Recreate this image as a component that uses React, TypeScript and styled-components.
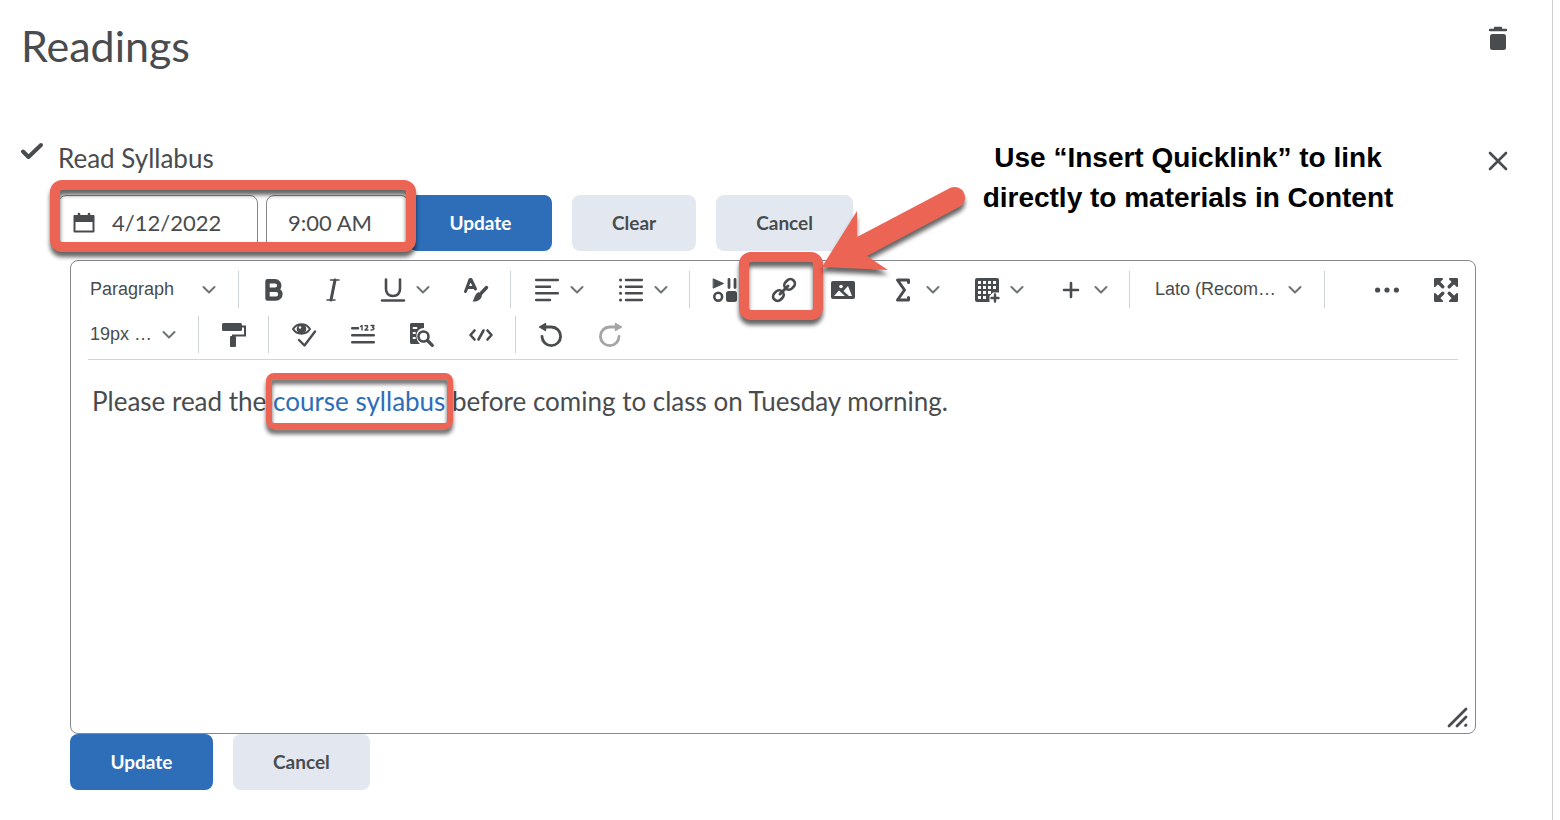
import React from "react";
import styled, { createGlobalStyle } from "styled-components";

const ink = "#494c4e";
const coral = "#ec6453";

const GlobalStyle = createGlobalStyle`
  *, *::before, *::after { box-sizing: border-box; }
  body { margin: 0; background: #fff; color: ${ink}; font-family: Lato, "Open Sans", sans-serif; }
  button, input, select { font: inherit; color: inherit; }
`;

const Page = styled.main`
  min-height: 100vh;
  margin-right: 7px;
  padding: 19px 45px 30px 21px;
  border-right: 1px solid #cdcdcd;
`;

const Header = styled.header`
  display: flex;
  justify-content: space-between;
  align-items: flex-start;
  margin-bottom: 66px;
`;

const Title = styled.h1`
  margin: 0;
  font-size: 43px;
  line-height: 54px;
  font-weight: 400;
`;

const IconButton = styled.button<{ $top: number }>`
  display: flex;
  margin: ${(p) => p.$top}px 0 0;
  padding: 0;
  border: 0;
  background: none;
  cursor: pointer;
`;

const Item = styled.section`
  display: grid;
  grid-template-columns: 24px minmax(0, 1fr) 18px;
  column-gap: 13px;
  align-items: start;
`;

const CheckMark = styled.span`
  display: flex;
  padding-top: 1px;
`;

const ItemTitle = styled.h2`
  margin: 0 0 18px;
  font-size: 26px;
  line-height: 38px;
  font-weight: 400;
`;

const ButtonRow = styled.div`
  display: flex;
  gap: 20px;
`;

const EditorActions = styled(ButtonRow)`
  margin-left: 12px;
`;

const DueRow = styled.div`
  display: flex;
  margin-bottom: 9px;
`;

const DueFields = styled.div`
  position: relative;
  display: flex;
  gap: 8px;
`;

const Field = styled.label<{ $wide?: boolean }>`
  display: flex;
  align-items: center;
  gap: 17px;
  width: ${(p) => (p.$wide ? 200 : 143)}px;
  height: 56px;
  padding: 0 14px 0 ${(p) => (p.$wide ? 14 : 21)}px;
  border: 1px solid #86898b;
  border-radius: 8px;

  svg { flex: none; }
`;

const FieldInput = styled.input`
  flex: 1;
  min-width: 0;
  padding: 0;
  border: 0;
  outline: 0;
  background: none;
  font-size: 22px;
  line-height: 32px;
`;

const Button = styled.button<{ $primary?: boolean }>`
  min-width: ${(p) => (p.$primary ? 143 : 124)}px;
  height: 56px;
  padding: 0 40px;
  border: 0;
  border-radius: 8px;
  background: ${(p) => (p.$primary ? "#2e6db8" : "#e3e8f0")};
  color: ${(p) => (p.$primary ? "#fff" : ink)};
  font-size: 19px;
  line-height: 28px;
  font-weight: 700;
  cursor: pointer;
`;

const Highlight = styled.span<{ $inset: string; $thick: number }>`
  position: absolute;
  inset: ${(p) => p.$inset};
  z-index: 2;
  border: ${(p) => p.$thick}px solid ${coral};
  border-radius: ${(p) => p.$thick + 2}px;
  filter: drop-shadow(0 5px 2px rgba(0, 0, 0, 0.6));
  pointer-events: none;
`;

const Editor = styled.div`
  position: relative;
  display: flex;
  flex-direction: column;
  min-height: 474px;
  margin-left: 12px;
  padding-top: 6px;
  border: 1px solid #86898b;
  border-radius: 8px;
`;

const ToolRow = styled.div`
  display: flex;
  align-items: center;
  height: 45px;
  padding-left: 19px;
`;

const Separator = styled.span`
  flex: none;
  width: 1px;
  height: 37px;
  margin: 0 5px;
  background: #cdd5dc;
`;

const Tool = styled.button<{ $split?: boolean }>`
  display: flex;
  flex: none;
  align-items: center;
  justify-content: ${(p) => (p.$split ? "flex-start" : "center")};
  gap: 11px;
  width: ${(p) => (p.$split ? 84 : 59)}px;
  height: 45px;
  padding: 0 0 0 ${(p) => (p.$split ? 19 : 0)}px;
  border: 0;
  background: none;
  cursor: pointer;
`;

const ToolAnchor = styled.span`
  position: relative;
  display: flex;
  flex: none;
`;

const ToolsEnd = styled.span`
  display: flex;
  margin-left: auto;
`;

const Picker = styled.span<{ $width: number; $indent?: boolean }>`
  display: flex;
  flex: none;
  align-items: center;
  width: ${(p) => p.$width}px;
  margin: 0 17px 0 ${(p) => (p.$indent ? 20 : 0)}px;
`;

const Select = styled.select`
  flex: 1;
  min-width: 0;
  padding: 0 0 2px;
  border: 0;
  outline: 0;
  appearance: none;
  background: none;
  font-family: "Liberation Sans", Arial, sans-serif;
  font-size: 18px;
  line-height: 28px;
`;

const ToolbarRule = styled.hr`
  width: calc(100% - 34px);
  margin: 2px 17px 0;
  border: 0;
  border-top: 1px solid #cdd5dc;
`;

const Content = styled.p`
  margin: 0;
  padding: 21px;
  font-size: 26px;
  line-height: 40px;
`;

const QuickLink = styled.a`
  position: relative;
  color: #2e6db8;
  text-decoration: none;
`;

const ResizeHandle = styled.span`
  display: flex;
  margin: auto 5px 4px auto;
`;

const Arrow = styled.svg`
  position: absolute;
  left: 59px;
  top: -87px;
  z-index: 3;
  overflow: visible;
  filter: drop-shadow(0 5px 2px rgba(0, 0, 0, 0.6));
  pointer-events: none;
`;

const Callout = styled.p`
  position: absolute;
  left: 214px;
  bottom: 94px;
  width: 440px;
  margin: 0;
  color: #000;
  font-family: "Liberation Sans", Arial, sans-serif;
  font-size: 28px;
  line-height: 40px;
  font-weight: 700;
  text-align: center;
`;

type IconProps = { children: React.ReactNode; w?: number; h?: number; color?: string };

const Icon = ({ children, w = 24, h = 24, color = ink }: IconProps) => (
  <svg
    width={w}
    height={h}
    viewBox={`0 0 ${w} ${h}`}
    fill="none"
    stroke={color}
    strokeWidth="2"
    strokeLinecap="round"
    strokeLinejoin="round"
    overflow="visible"
    aria-hidden="true"
  >
    {children}
  </svg>
);

const Chevron = () => (
  <Icon w={14} h={10} color="#6e7376">
    <path d="M1.5 2 L7 7.5 L12.500 2" />
  </Icon>
);

const BoldIcon = () => (
  <Icon>
    <path d="M5.500 3.200 H13 a4.300 4.300 0 0 1 0 8.600 H5.500 Z M5.500 11.800 H14 a4.400 4.400 0 0 1 0 8.800 H5.500 Z" strokeWidth="4.400" />
  </Icon>
);
const ItalicIcon = () => (
  <Icon>
    <path d="M9.500 2 H18 M6 22 H14" strokeWidth="1.600" />
    <path d="M14 2 L10 22" strokeWidth="3" />
  </Icon>
);
const UnderlineIcon = () => (
  <Icon>
    <path d="M5 1.500 V11 c0 4 2.500 7 7 7 s7-3 7-7 V1.500" strokeWidth="2.600" />
    <path d="M1 22.500 H23" strokeWidth="2.400" />
  </Icon>
);
const FormatIcon = () => (
  <Icon>
    <path d="M1.500 13.500 L6 1.500 H7 L11.500 11 M3.500 9.500 H10" strokeWidth="3" />
    <path d="M22.500 9.500 L16 16.500" strokeWidth="3.400" />
    <path d="M14.500 14 L18 17.800 C17 22 13 24 8.500 23.500 C10.500 21 10.500 16 14.500 14 Z" fill={ink} stroke="none" />
  </Icon>
);
const AlignIcon = () => (
  <Icon>
    <path d="M1.200 2 H22.800 M1.200 8.700 H15 M1.200 15.300 H22.800 M1.200 22 H15" strokeWidth="2.500" />
  </Icon>
);
const ListIcon = () => (
  <Icon>
    <path d="M7 2 H22.800 M7 8.700 H22.800 M7 15.300 H22.800 M7 22 H22.800" strokeWidth="2.500" />
    <path d="M1.500 2 H1.600 M1.500 8.700 H1.600 M1.500 15.300 H1.600 M1.500 22 H1.600" strokeWidth="3" />
  </Icon>
);
const MediaIcon = () => (
  <Icon>
    <path d="M0.500 1 L10.500 5.500 L0.500 10 Z" fill={ink} strokeWidth="1" />
    <path d="M16 1.500 V9.500 M22 1.500 V9.500" strokeWidth="2.800" />
    <circle cx="5.200" cy="18.700" r="3.900" strokeWidth="2.600" />
    <rect x="13" y="13" width="11" height="11" rx="2.500" fill={ink} stroke="none" />
  </Icon>
);
const LinkIcon = () => (
  <Icon>
    <rect x="-5.600" y="-4.500" width="11.200" height="9" rx="4.500" transform="translate(17.600 6.400) rotate(-45)" strokeWidth="2.700" />
    <rect x="-5.600" y="-4.500" width="11.200" height="9" rx="4.500" transform="translate(6.400 17.600) rotate(-45)" strokeWidth="2.700" />
    <path d="M8 16 L16 8" strokeWidth="3" />
  </Icon>
);
const ImageIcon = () => (
  <Icon>
    <rect x="0" y="3" width="24" height="18" rx="2" fill={ink} stroke="none" />
    <circle cx="10" cy="8.500" r="1.800" fill="#fff" stroke="none" />
    <path d="M3 18 L8 12.500 L14 18 Z M12.500 13 L17 8 L21 18 H18 Z" fill="#fff" stroke="none" />
  </Icon>
);
const SigmaIcon = () => (
  <Icon>
    <path d="M17.500 4.500 V2 H6.500 L13.500 12 L6.500 22 H17.500 V19.500" strokeWidth="3" />
  </Icon>
);
const TableIcon = () => (
  <Icon>
    <path d="M2 0 H22 a2 2 0 0 1 2 2 V14.500 H18 L14.500 18 V24 H2 a2 2 0 0 1-2-2 V2 a2 2 0 0 1 2-2 Z" fill={ink} stroke="none" />
    {[3, 8, 13, 18].map((y) =>
      [3, 8, 13, 18].map((x) =>
        x + y < 28 ? <rect key={`${x}-${y}`} x={x} y={y} width="3" height="3" fill="#fff" stroke="none" /> : null
      )
    )}
    <path d="M20 16.500 V23.500 M16.500 20 H23.500" strokeWidth="2.400" />
  </Icon>
);
const PlusIcon = () => (
  <Icon>
    <path d="M12 5 V19 M5 12 H19" strokeWidth="2.600" />
  </Icon>
);
const DotsIcon = () => (
  <Icon>
    <g fill={ink} stroke="none">
      <circle cx="2.600" cy="12" r="2.600" />
      <circle cx="12" cy="12" r="2.600" />
      <circle cx="21.400" cy="12" r="2.600" />
    </g>
  </Icon>
);
const ExpandIcon = () => (
  <Icon>
    {[0, 90, 180, 270].map((turn) => (
      <g key={turn} transform={`rotate(${turn} 12 12)`}>
        <path d="M1.200 0 H8.200 a.9 .9 0 0 1 .6 1.500 L1.500 8.800 A.9 .9 0 0 1 0 8.200 V1.200 A1.200 1.200 0 0 1 1.200 0 Z" fill={ink} stroke="none" />
        <path d="M3 3 L8.800 8.800" strokeWidth="3.400" />
      </g>
    ))}
  </Icon>
);
const RollerIcon = () => (
  <Icon>
    <rect x="0" y="0" width="20" height="8" rx="1.500" fill={ink} stroke="none" />
    <path d="M19 3.500 H23 V12.500 H11 V16" strokeLinejoin="miter" />
    <rect x="8" y="13" width="6" height="11" rx="1" fill={ink} stroke="none" />
  </Icon>
);
const AccessibilityIcon = () => (
  <Icon>
    <path d="M1 6 C5-.3 14-.3 18 6 C14 12.300 5 12.300 1 6 Z" strokeWidth="2" />
    <circle cx="9.500" cy="6" r="4.800" fill={ink} stroke="none" />
    <circle cx="8" cy="4.500" r="1.200" fill="#fff" stroke="none" />
    <path d="M7 17 L12.500 22.500 L23 8.500" strokeWidth="2.400" />
  </Icon>
);
const WordCountIcon = () => (
  <Icon>
    <path d="M1.200 5.200 H7 M1.200 12.200 H22.800 M1.200 19.200 H22.800" strokeWidth="2.500" />
    <path d="M9.500 3.500 L11 2.500 V7 M14 2.800 H16.500 V4.500 L14 7 H17 M20 2.500 H23 L21.500 4.500 C24 4.500 23.500 7.300 20 7" strokeWidth="1.400" />
  </Icon>
);
const PreviewIcon = () => (
  <Icon>
    <path d="M1.500 0 H14 V5 C9 5 6 9 6.500 14 C6.800 17 8 19 10 21 H1.500 A1.500 1.500 0 0 1 0 19.500 V1.500 A1.500 1.500 0 0 1 1.500 0 Z" fill={ink} stroke="none" />
    <path d="M3.500 5 H6.500 M3.500 10 H5 M3.500 15 H5" stroke="#fff" strokeWidth="1.800" />
    <circle cx="13.500" cy="13.500" r="5" strokeWidth="2.600" />
    <path d="M17.500 17.500 L22.300 22.300" strokeWidth="3.200" />
  </Icon>
);
const CodeIcon = () => (
  <Icon>
    <path d="M5.500 7.500 L1.500 12 L5.500 16.500 M18.500 7.500 L22.500 12 L18.500 16.500 M14.500 7.500 L9.500 16.500" strokeWidth="2.600" />
  </Icon>
);
const TurnIcon = ({ redo }: { redo?: boolean }) => {
  const color = redo ? "#a4a5a6" : ink;
  return (
    <Icon color={color}>
      <g transform={redo ? "translate(24 0) scale(-1 1)" : undefined}>
        <path d="M6 4 H12.500 A9.300 9.300 0 1 1 3 13.500" strokeWidth="2.800" />
        <path d="M0.500 4 L6.500 0.500 V7.500 Z" fill={color} strokeWidth="1.400" />
      </g>
    </Icon>
  );
};
const CalendarIcon = () => (
  <Icon w={22} h={22}>
    <path d="M1.500 4 H20.500 V19.500 H1.500 Z" />
    <rect x="1" y="3" width="20" height="7" fill={ink} stroke="none" />
    <path d="M6 2 V4 M16 2 V4" strokeWidth="2.600" />
  </Icon>
);

type ToolItem = { label: string; icon: React.ReactNode; split?: boolean };

const Tools = ({ items }: { items: ToolItem[] }) => (
  <>
    {items.map((t) => (
      <Tool key={t.label} type="button" aria-label={t.label} $split={t.split}>
        {t.icon}
        {t.split && <Chevron />}
      </Tool>
    ))}
  </>
);

type DropdownProps = { label: string; value: string; width: number; indent?: boolean };

const Dropdown = ({ label, value, width, indent }: DropdownProps) => (
  <Picker $width={width} $indent={indent}>
    <Select aria-label={label} defaultValue={value}>
      <option>{value}</option>
    </Select>
    <Chevron />
  </Picker>
);

export default function App() {
  return (
    <>
      <GlobalStyle />
      <Page>
        <Header>
          <Title>Readings</Title>
          <IconButton type="button" aria-label="Delete" $top={7}>
            <Icon w={18} h={24}>
              <path d="M1 4 H17 M6 2 H12" strokeWidth="2.400" />
              <rect x="1" y="8" width="16" height="16" rx="2.500" fill={ink} stroke="none" />
            </Icon>
          </IconButton>
        </Header>

        <Item>
          <CheckMark>
            <Icon w={22} h={22}>
              <path d="M2 11.500 L7.500 17 L20 5" strokeWidth="4" />
            </Icon>
          </CheckMark>
          <div>
            <ItemTitle>Read Syllabus</ItemTitle>
            <DueRow>
              <DueFields>
                <Field $wide>
                  <CalendarIcon />
                  <FieldInput aria-label="Due date" defaultValue="4/12/2022" />
                </Field>
                <Field>
                  <FieldInput aria-label="Due time" defaultValue="9:00 AM" />
                </Field>
                <Highlight $inset="-15px -7px -1px -8px" $thick={10} />
              </DueFields>
              <ButtonRow>
                <Button type="button" $primary>Update</Button>
                <Button type="button">Clear</Button>
                <Button type="button">Cancel</Button>
              </ButtonRow>
            </DueRow>

            <Editor>
              <ToolRow>
                <Dropdown label="Block format" value="Paragraph" width={126} />
                <Separator />
                <Tools
                  items={[
                    { label: "Bold", icon: <BoldIcon /> },
                    { label: "Italic", icon: <ItalicIcon /> },
                    { label: "Underline", icon: <UnderlineIcon />, split: true },
                    { label: "Format", icon: <FormatIcon /> },
                  ]}
                />
                <Separator />
                <Tools
                  items={[
                    { label: "Align", icon: <AlignIcon />, split: true },
                    { label: "List", icon: <ListIcon />, split: true },
                  ]}
                />
                <Separator />
                <Tools items={[{ label: "Insert stuff", icon: <MediaIcon /> }]} />
                <ToolAnchor>
                  <Tool type="button" aria-label="Insert Quicklink">
                    <LinkIcon />
                  </Tool>
                  <Highlight $inset="-15px -10px -8px -15px" $thick={10} />
                  <Arrow width="160" height="100" viewBox="0 0 160 100" aria-hidden="true">
                    <path d="M9 87 L44 31 L44 57 L137 8 A10.500 10.500 0 0 1 146 27 L54 76 L75 90 Z" fill={coral} />
                  </Arrow>
                  <Callout>
                    Use “Insert Quicklink” to link
                    <br />
                    directly to materials in Content
                  </Callout>
                </ToolAnchor>
                <Tools
                  items={[
                    { label: "Insert image", icon: <ImageIcon /> },
                    { label: "Equation", icon: <SigmaIcon />, split: true },
                    { label: "Table", icon: <TableIcon />, split: true },
                    { label: "Other insert options", icon: <PlusIcon />, split: true },
                  ]}
                />
                <Separator />
                <Dropdown label="Font family" value="Lato (Recom…" width={147} indent />
                <Separator />
                <ToolsEnd>
                  <Tools
                    items={[
                      { label: "More actions", icon: <DotsIcon /> },
                      { label: "Fullscreen", icon: <ExpandIcon /> },
                    ]}
                  />
                </ToolsEnd>
              </ToolRow>
              <ToolRow>
                <Dropdown label="Font size" value="19px …" width={86} />
                <Separator />
                <Tools items={[{ label: "Format painter", icon: <RollerIcon /> }]} />
                <Separator />
                <Tools
                  items={[
                    { label: "Accessibility checker", icon: <AccessibilityIcon /> },
                    { label: "Word count", icon: <WordCountIcon /> },
                    { label: "Preview", icon: <PreviewIcon /> },
                    { label: "Source code", icon: <CodeIcon /> },
                  ]}
                />
                <Separator />
                <Tools
                  items={[
                    { label: "Undo", icon: <TurnIcon /> },
                    { label: "Redo", icon: <TurnIcon redo /> },
                  ]}
                />
              </ToolRow>
              <ToolbarRule />
              <Content>
                Please read the{" "}
                <QuickLink href="#syllabus">
                  course syllabus
                  <Highlight $inset="-12px -8px -12px -7px" $thick={6} />
                </QuickLink>{" "}
                before coming to class on Tuesday morning.
              </Content>
              <ResizeHandle>
                <Icon>
                  <path d="M3 21 L20 4 M11 21 L20 12 M19.500 20.500 L20 20" strokeWidth="2.800" />
                </Icon>
              </ResizeHandle>
            </Editor>
            <EditorActions>
              <Button type="button" $primary>Update</Button>
              <Button type="button">Cancel</Button>
            </EditorActions>
          </div>
          <IconButton type="button" aria-label="Close" $top={13}>
            <Icon w={18} h={18}>
              <path d="M1 1 L17 17 M17 1 L1 17" strokeWidth="2.600" />
            </Icon>
          </IconButton>
        </Item>
      </Page>
    </>
  );
}
